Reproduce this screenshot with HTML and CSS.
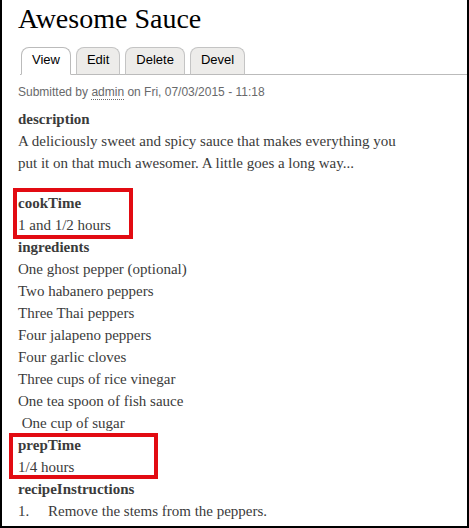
FILE: index.html
```html
<!DOCTYPE html>
<html>
<head>
<meta charset="utf-8">
<title>Awesome Sauce</title>
<link rel="stylesheet" href="styles.css">
</head>
<body>
<div class="frame">
  <h1 class="title">Awesome Sauce</h1>
  <ul class="tabs">
    <li class="tab active">View</li>
    <li class="tab">Edit</li>
    <li class="tab">Delete</li>
    <li class="tab">Devel</li>
  </ul>
  <div class="submitted">Submitted by <span class="user">admin</span> on Fri, 07/03/2015 - 11:18</div>
  <div class="content">
    <div class="field field-desc">
      <div class="label">description</div>
      <div class="value">A deliciously sweet and spicy sauce that makes everything you put it on that much awesomer. A little goes a long way...</div>
    </div>
    <div class="field highlight-cook">
      <div class="label">cookTime</div>
      <div class="value">1 and 1/2 hours</div>
    </div>
    <div class="field">
      <div class="label">ingredients</div>
      <div class="value">One ghost pepper (optional)</div>
      <div class="value">Two habanero peppers</div>
      <div class="value">Three Thai peppers</div>
      <div class="value">Four jalapeno peppers</div>
      <div class="value">Four garlic cloves</div>
      <div class="value">Three cups of rice vinegar</div>
      <div class="value">One tea spoon of fish sauce</div>
      <div class="value">&nbsp;One cup of sugar</div>
    </div>
    <div class="field highlight-prep">
      <div class="label">prepTime</div>
      <div class="value">1/4 hours</div>
    </div>
    <div class="field">
      <div class="label">recipeInstructions</div>
      <div class="step"><span class="num">1.</span><span>Remove the stems from the peppers.</span></div>
    </div>
  </div>
</div>
</body>
</html>
```

FILE: styles.css
```css
html, body {
  margin: 0;
  padding: 0;
  background: #fff;
}

.frame {
  box-sizing: border-box;
  width: 469px;
  height: 528px;
  overflow: hidden;
  border-left: 2px solid #000;
  border-right: 2px solid #000;
  border-bottom: 2px solid #000;
  padding: 3px 0 0 0;
}

.title {
  margin: 0 0 0 16px;
  font-family: "Liberation Serif", "Times New Roman", serif;
  font-weight: normal;
  font-size: 28px;
  line-height: 32px;
  color: #000;
}

.tabs {
  display: flex;
  list-style: none;
  margin: 12px 0 0 18px;
  padding: 0 0 0 1px;
  border-bottom: 1px solid #bbb;
}

.tab {
  margin: 0 5px -1px 0;
  padding: 0 10px 2px;
  line-height: 24px;
  font-family: "Liberation Sans", Arial, sans-serif;
  font-size: 13px;
  color: #000;
  background: #edecea;
  border: 1px solid #c4c4c4;
  border-bottom-color: #bbb;
  border-radius: 8px 8px 0 0;
}

.tab.active {
  background: #fff;
  border-color: #bbb;
  border-bottom-color: #fff;
}

.submitted {
  margin: 8px 0 0 16px;
  font-family: "Liberation Sans", Arial, sans-serif;
  font-size: 12px;
  line-height: 18px;
  color: #68696b;
}

.user {
  border-bottom: 1px dotted #68696b;
}

.content {
  margin: 7px 0 0 16px;
  font-family: "Liberation Serif", "Times New Roman", serif;
  font-size: 15px;
  line-height: 22px;
  color: #3b3b3b;
}

.field {
  position: relative;
}

.field-desc {
  width: 390px;
  margin-bottom: 18px;
}

.label {
  font-weight: bold;
  color: #3b3b3b;
}

.step {
  display: flex;
}

.step .num {
  width: 30px;
  flex: none;
}

.highlight-cook::after,
.highlight-prep::after {
  content: "";
  position: absolute;
  box-sizing: border-box;
  border: 4px solid #e20b12;
  pointer-events: none;
}

.highlight-cook::after {
  top: -4px;
  left: -5px;
  width: 120px;
  height: 51px;
}

.highlight-prep::after {
  top: -1px;
  left: -9px;
  width: 149px;
  height: 46px;
}
```
